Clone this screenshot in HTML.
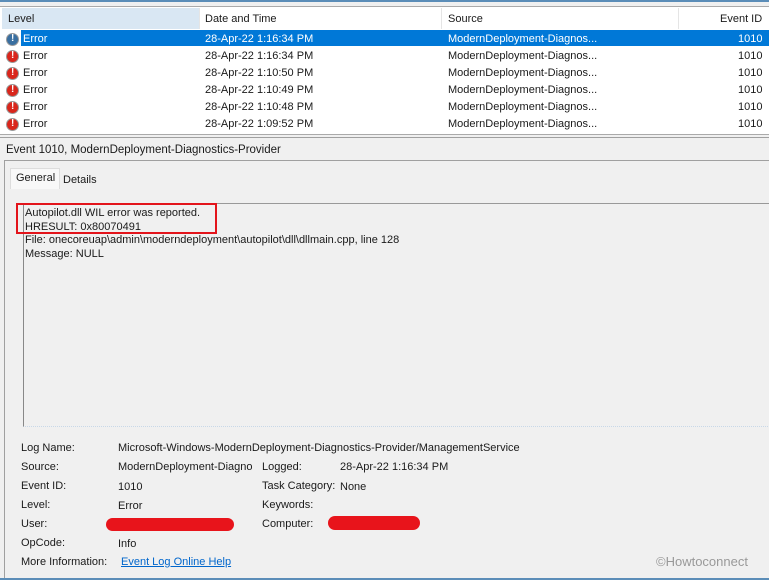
<!DOCTYPE html>
<html><head><style>
body{margin:0;width:769px;height:580px;position:relative;overflow:hidden;background:#f0f0f0;font-family:"Liberation Sans",sans-serif;font-size:11px;color:#1a1a1a}
.a{position:absolute;white-space:nowrap}
.row{position:absolute;left:0;width:769px;height:17px}
.ic{position:absolute;left:6px;top:2px;width:13px;height:13px;border-radius:50%;background:#d9261c;border:1px solid #999;box-sizing:border-box}
.ic:after{content:"!";position:absolute;left:4px;top:-1px;color:#fff;font-weight:bold;font-size:10px}
</style></head><body>
<div class="a" style="left:0;top:0;width:769px;height:2px;background:#5b8db8"></div>
<div class="a" style="left:0;top:6px;width:769px;height:127px;background:#fff;border-top:1px solid #aaa;border-bottom:1px solid #aaa"></div>
<div class="a" style="left:2px;top:8px;width:197px;height:21px;background:#d9e7f3"></div>
<div class="a" style="left:199px;top:8px;width:1px;height:21px;background:#e5e5e5"></div>
<div class="a" style="left:441px;top:8px;width:1px;height:21px;background:#e5e5e5"></div>
<div class="a" style="left:678px;top:8px;width:1px;height:21px;background:#e5e5e5"></div>
<div class="a" style="left:8px;top:13px">Level</div>
<div class="a" style="left:205px;top:13px">Date and Time</div>
<div class="a" style="left:448px;top:13px">Source</div>
<div class="a" style="left:720px;top:13px">Event ID</div>
<div class="a" style="left:21px;top:30px;width:748px;height:16px;background:#0078d7"></div>
<div class="row" style="top:31px;color:#fff"><div class="ic" style="background:#3a6fa0"></div><span class="a" style="left:23px;top:2px">Error</span><span class="a" style="left:205px;top:2px">28-Apr-22 1:16:34 PM</span><span class="a" style="left:448px;top:2px">ModernDeployment-Diagnos...</span><span class="a" style="left:738px;top:2px">1010</span></div>
<div class="row" style="top:48px"><div class="ic"></div><span class="a" style="left:23px;top:2px">Error</span><span class="a" style="left:205px;top:2px">28-Apr-22 1:16:34 PM</span><span class="a" style="left:448px;top:2px">ModernDeployment-Diagnos...</span><span class="a" style="left:738px;top:2px">1010</span></div>
<div class="row" style="top:65px"><div class="ic"></div><span class="a" style="left:23px;top:2px">Error</span><span class="a" style="left:205px;top:2px">28-Apr-22 1:10:50 PM</span><span class="a" style="left:448px;top:2px">ModernDeployment-Diagnos...</span><span class="a" style="left:738px;top:2px">1010</span></div>
<div class="row" style="top:82px"><div class="ic"></div><span class="a" style="left:23px;top:2px">Error</span><span class="a" style="left:205px;top:2px">28-Apr-22 1:10:49 PM</span><span class="a" style="left:448px;top:2px">ModernDeployment-Diagnos...</span><span class="a" style="left:738px;top:2px">1010</span></div>
<div class="row" style="top:99px"><div class="ic"></div><span class="a" style="left:23px;top:2px">Error</span><span class="a" style="left:205px;top:2px">28-Apr-22 1:10:48 PM</span><span class="a" style="left:448px;top:2px">ModernDeployment-Diagnos...</span><span class="a" style="left:738px;top:2px">1010</span></div>
<div class="row" style="top:116px"><div class="ic"></div><span class="a" style="left:23px;top:2px">Error</span><span class="a" style="left:205px;top:2px">28-Apr-22 1:09:52 PM</span><span class="a" style="left:448px;top:2px">ModernDeployment-Diagnos...</span><span class="a" style="left:738px;top:2px">1010</span></div>
<div class="a" style="left:0;top:137px;width:769px;height:1px;background:#a0a0a0"></div>
<div class="a" style="left:6px;top:144px;font-size:11.5px">Event 1010, ModernDeployment-Diagnostics-Provider</div>
<div class="a" style="left:4px;top:160px;width:765px;height:1px;background:#a0a0a0"></div>
<div class="a" style="left:4px;top:160px;width:1px;height:420px;background:#a0a0a0"></div>
<div class="a" style="left:10px;top:168px;width:48px;height:20px;background:#f8f8f8;border:1px solid #ddd;border-bottom:none"></div>
<div class="a" style="left:16px;top:172px">General</div>
<div class="a" style="left:63px;top:174px">Details</div>
<div class="a" style="left:23px;top:203px;width:746px;height:222px;border-left:1px solid #888;border-top:1px solid #999;border-bottom:1px dotted #c8d8e8"></div>
<div class="a" style="left:25px;top:207px;line-height:13.7px">Autopilot.dll WIL error was reported.<br>HRESULT: 0x80070491<br>File: onecoreuap\admin\moderndeployment\autopilot\dll\dllmain.cpp, line 128<br>Message: NULL</div>
<div class="a" style="left:16px;top:203px;width:201px;height:31px;border:2px solid #e3141b;box-sizing:border-box"></div>
<div class="a" style="left:21px;top:442px">Log Name:</div>
<div class="a" style="left:118px;top:442px">Microsoft-Windows-ModernDeployment-Diagnostics-Provider/ManagementService</div>
<div class="a" style="left:21px;top:461px">Source:</div>
<div class="a" style="left:118px;top:461px">ModernDeployment-Diagno</div>
<div class="a" style="left:262px;top:461px">Logged:</div>
<div class="a" style="left:340px;top:461px">28-Apr-22 1:16:34 PM</div>
<div class="a" style="left:21px;top:480px">Event ID:</div>
<div class="a" style="left:118px;top:481px">1010</div>
<div class="a" style="left:262px;top:480px">Task Category:</div>
<div class="a" style="left:340px;top:481px">None</div>
<div class="a" style="left:21px;top:499px">Level:</div>
<div class="a" style="left:118px;top:500px">Error</div>
<div class="a" style="left:262px;top:499px">Keywords:</div>
<div class="a" style="left:21px;top:518px">User:</div>
<div class="a" style="left:262px;top:518px">Computer:</div>
<div class="a" style="left:106px;top:518px;width:128px;height:13px;background:#e8141b;border-radius:7px"></div>
<div class="a" style="left:328px;top:516px;width:92px;height:14px;background:#e8141b;border-radius:7px"></div>
<div class="a" style="left:21px;top:537px">OpCode:</div>
<div class="a" style="left:118px;top:538px">Info</div>
<div class="a" style="left:21px;top:556px">More Information:</div>
<div class="a" style="left:121px;top:556px;color:#0066cc;text-decoration:underline">Event Log Online Help</div>
<div class="a" style="left:656px;top:554px;color:#999;font-size:13px">©Howtoconnect</div>
<div class="a" style="left:0;top:578px;width:769px;height:2px;background:#5b8db8"></div>
</body></html>
